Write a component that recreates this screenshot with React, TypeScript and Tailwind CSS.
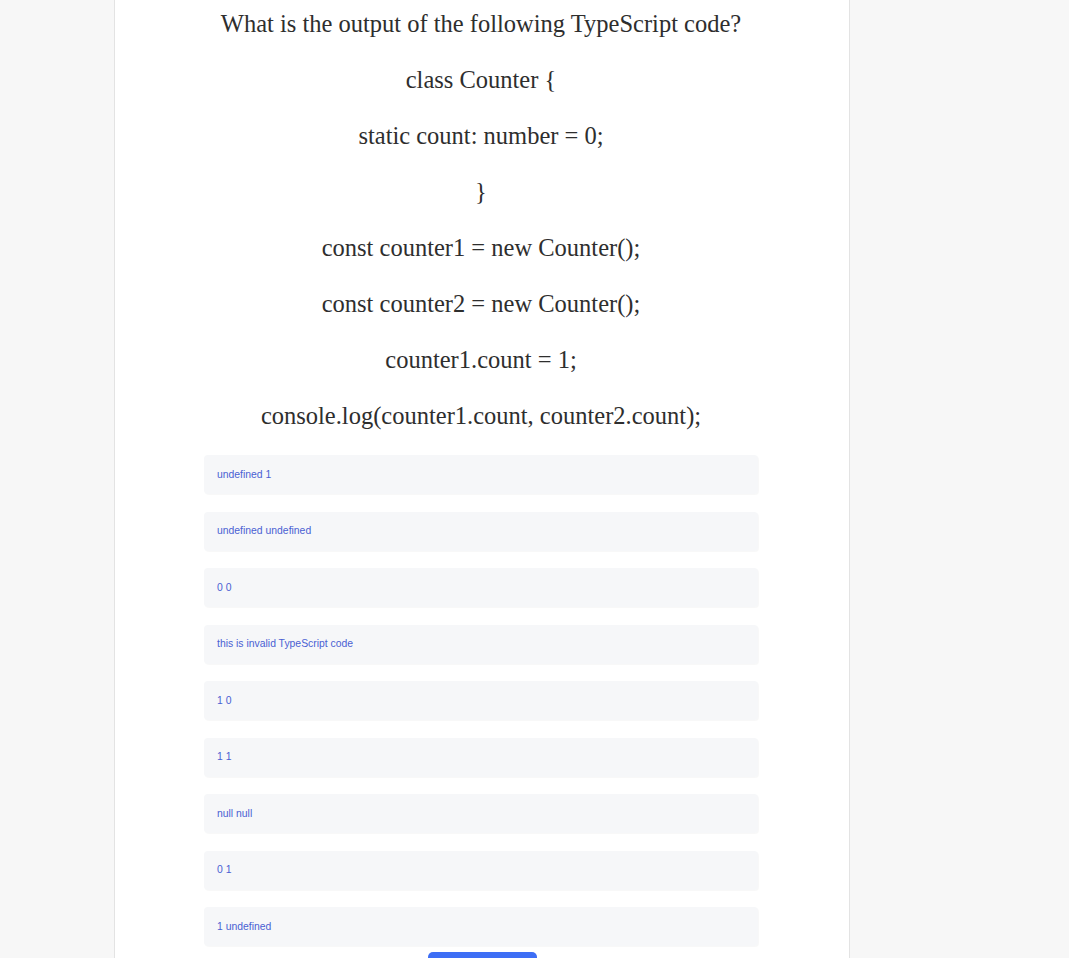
const codeLines = [
  "What is the output of the following TypeScript code?",
  "class Counter {",
  "static count: number = 0;",
  "}",
  "const counter1 = new Counter();",
  "const counter2 = new Counter();",
  "counter1.count = 1;",
  "console.log(counter1.count, counter2.count);",
];

const options = [
  "undefined 1",
  "undefined undefined",
  "0 0",
  "this is invalid TypeScript code",
  "1 0",
  "1 1",
  "null null",
  "0 1",
  "1 undefined",
];

export default function App() {
  return (
    <div className="min-h-screen bg-[#f7f7f7]">
      <div className="ml-[114px] w-[736px] min-h-screen bg-white border-x border-[#e3e3e3] pl-[89px] pr-[91px] pt-[6px]">
        <div className="flex flex-col gap-[20px] text-center text-[24.5px] leading-[36px] text-[#2e2e2e] font-['Liberation_Serif',Georgia,serif]">
          {codeLines.map((line, i) => (
            <p key={i} className="whitespace-nowrap">{line}</p>
          ))}
        </div>

        <div className="mt-[21px] flex flex-col gap-[17.5px] font-['Liberation_Sans',Arial,sans-serif]">
          {options.map((opt) => (
            <button
              key={opt}
              className="h-[39px] w-full rounded-[4px] bg-[#f6f7f9] pl-[13px] text-left text-[10.4px] text-[#4a5fd3] shadow-[1px_1px_1px_rgba(0,0,0,0.03)]"
            >
              {opt}
            </button>
          ))}
        </div>

        <div className="mt-[6px] flex justify-center pl-[2px]">
          <button className="h-[38px] w-[109px] rounded-[5px] bg-[#3d6ef5] text-[14px] text-white font-['Liberation_Sans',Arial,sans-serif]">
            Submit
          </button>
        </div>
      </div>
    </div>
  );
}
